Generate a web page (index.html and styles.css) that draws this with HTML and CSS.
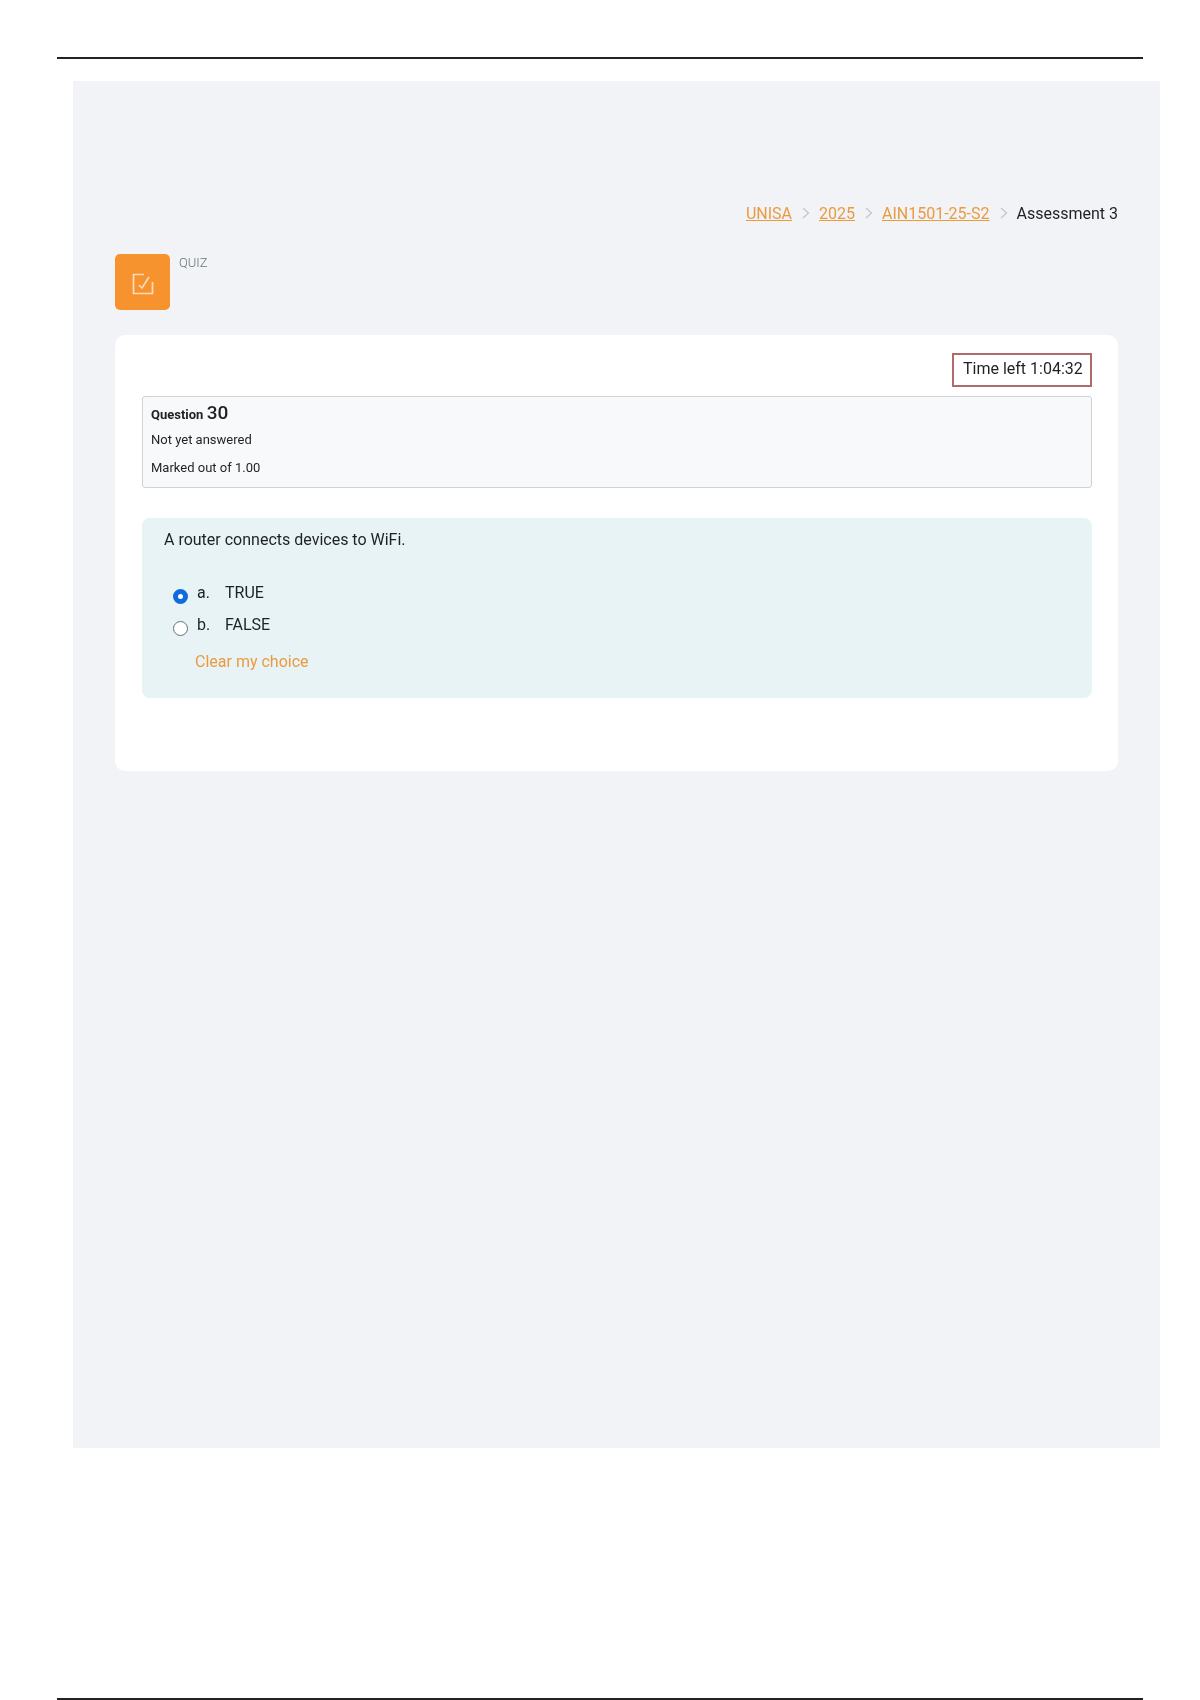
FILE: index.html
```html
<!DOCTYPE html>
<html lang="en">
<head>
    <meta charset="UTF-8">
    <title>Assessment 3</title>
    <link rel="stylesheet" href="styles.css">
</head>
<body>
    <div class="rule rule-top"></div>

    <div class="panel">
        <nav class="breadcrumb">
            <a href="#">UNISA</a>
            <svg class="sep" xmlns="http://www.w3.org/2000/svg" width="8" height="12" viewBox="0 0 8 12" fill="none" stroke="currentColor" stroke-width="1.3"><path d="M1 1l5.5 5L1 11"/></svg>
            <a href="#">2025</a>
            <svg class="sep" xmlns="http://www.w3.org/2000/svg" width="8" height="12" viewBox="0 0 8 12" fill="none" stroke="currentColor" stroke-width="1.3"><path d="M1 1l5.5 5L1 11"/></svg>
            <a href="#">AIN1501-25-S2</a>
            <svg class="sep" xmlns="http://www.w3.org/2000/svg" width="8" height="12" viewBox="0 0 8 12" fill="none" stroke="currentColor" stroke-width="1.3"><path d="M1 1l5.5 5L1 11"/></svg>
            <span class="current">Assessment 3</span>
        </nav>

        <div class="activity">
            <div class="activity-icon">
                <svg xmlns="http://www.w3.org/2000/svg" width="24" height="24" viewBox="0 0 24 24" fill="none" stroke="currentColor" stroke-width="1.7">
                    <path d="M13 2.5H2.5v19h19V10"/>
                    <path d="M8 13l3 3L18 5"/>
                </svg>
            </div>
            <div class="activity-label">QUIZ</div>
        </div>

        <div class="card">
            <div class="timer-row">
                <div class="timer">Time left 1:04:32</div>
            </div>

            <div class="info">
                <div class="qno"><b>Question</b> <span>30</span></div>
                <div class="state">Not yet answered</div>
                <div class="grade">Marked out of 1.00</div>
            </div>

            <div class="formulation">
                <div class="qtext">A router connects devices to WiFi.</div>
                <div class="answers">
                    <label class="answer">
                        <span class="radio radio-on"></span>
                        <span class="letter">a.</span>
                        <span>TRUE</span>
                    </label>
                    <label class="answer">
                        <span class="radio"></span>
                        <span class="letter">b.</span>
                        <span>FALSE</span>
                    </label>
                </div>
                <a class="clear" href="#">Clear my choice</a>
            </div>
        </div>
    </div>

    <div class="rule rule-bottom"></div>
</body>
</html>
```

FILE: styles.css
```css
body {
    margin: 0;
    height: 1700px;
    overflow: hidden;
    font-family: Roboto, "Liberation Sans", sans-serif;
    font-size: 16px;
    color: #1d2125;
    background: #fff;
    filter: blur(0.45px);
}

.rule {
    height: 2px;
    margin: 0 57px;
    background: #222;
}

.rule-top {
    margin-top: 57px;
}

.rule-bottom {
    margin-top: 250px;
}

.panel {
    box-sizing: border-box;
    width: 1087px;
    height: 1367px;
    margin: 22px 0 0 73px;
    padding: 122px 42px 0;
    background: #f1f3f6;
}

.breadcrumb {
    display: flex;
    justify-content: flex-end;
    align-items: center;
    height: 20px;
    white-space: nowrap;
}

.breadcrumb a {
    color: #ec9a3f;
}

.sep {
    margin: 0 9px 0 10px;
    color: #c3c7cb;
}

.current {
    color: #1d2125;
}

.activity {
    display: flex;
    gap: 9px;
    margin-top: 31px;
}

.activity-icon {
    display: flex;
    align-items: center;
    justify-content: center;
    width: 55px;
    height: 56px;
    padding-top: 3px;
    box-sizing: border-box;
    border-radius: 5px;
    background: #f7932f;
    color: #fbdcb8;
}

.activity-label {
    margin-top: 2px;
    color: #6a737b;
    font-size: 13px;
    font-weight: 300;
    line-height: 13px;
}

.card {
    box-sizing: border-box;
    height: 436px;
    margin-top: 25px;
    padding: 18px 26px 0 27px;
    border-radius: 10px;
    background: #fff;
}

.timer-row {
    display: flex;
    justify-content: flex-end;
}

.timer {
    box-sizing: border-box;
    width: 140px;
    height: 34px;
    padding: 4px 9px;
    border: 2px solid #b06b6b;
    line-height: 20px;
    white-space: nowrap;
}

.info {
    box-sizing: border-box;
    height: 92px;
    margin-top: 9px;
    padding: 5px 8px;
    border: 1px solid #cfd3d7;
    border-radius: 3px;
    background: #f8f9fa;
    font-size: 13px;
}

.qno {
    line-height: 22px;
}

.qno span {
    font-size: 19px;
    font-weight: 500;
}

.state {
    margin-top: 6px;
    line-height: 16px;
}

.grade {
    margin-top: 12px;
    line-height: 16px;
}

.formulation {
    box-sizing: border-box;
    height: 180px;
    margin-top: 30px;
    padding: 11px 22px;
    border-radius: 8px;
    background: #e7f3f5;
}

.qtext {
    line-height: 22px;
}

.answers {
    margin-top: 25px;
}

.answer {
    display: flex;
    align-items: center;
    height: 32px;
    padding-left: 9px;
}

.radio {
    box-sizing: border-box;
    width: 15px;
    height: 15px;
    margin-top: 8px;
    margin-right: 9px;
    border: 1px solid #6a6f75;
    border-radius: 50%;
    background: #fff;
}

.radio-on {
    border: 5px solid #0f6cdf;
}

.letter {
    width: 28px;
}

.clear {
    display: block;
    margin: 12px 0 0 31px;
    color: #ec9a3f;
    text-decoration: none;
    line-height: 20px;
}
```
